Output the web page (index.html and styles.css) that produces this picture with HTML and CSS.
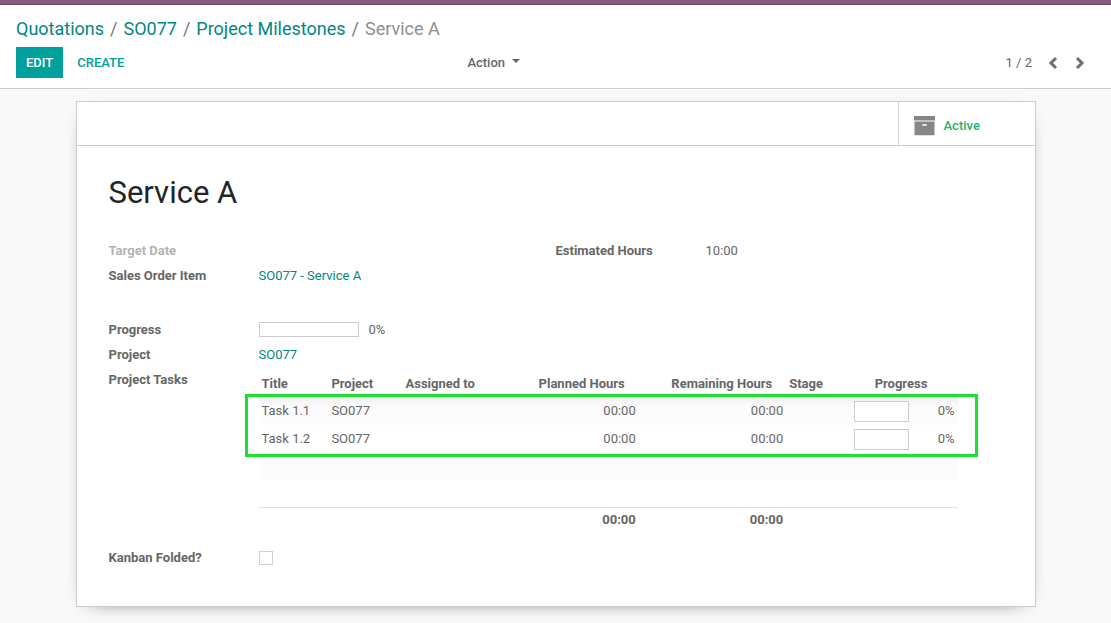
FILE: index.html
```html
<!DOCTYPE html>
<html lang="en">
<head>
<meta charset="utf-8">
<title>Service A - Odoo</title>
<link rel="stylesheet" href="styles.css">
</head>
<body>
<div class="navbar"></div>
<header class="control-panel">
  <nav aria-label="Breadcrumb">
    <ol class="breadcrumb">
      <li><a href="#">Quotations</a></li>
      <li><a href="#">SO077</a></li>
      <li><a href="#">Project Milestones</a></li>
      <li class="current">Service A</li>
    </ol>
  </nav>
  <div class="toolbar">
    <div class="buttons">
      <button type="button" class="btn btn-primary">EDIT</button>
      <button type="button" class="btn btn-link">CREATE</button>
    </div>
    <div class="toolbar-right">
      <button type="button" class="dropdown">Action<span class="caret"></span></button>
      <div class="pager">
        <span>1 / 2</span>
        <button type="button" aria-label="Previous"><svg width="10" height="14" viewBox="0 0 10 14"><path d="M8 2L3 7l5 5" /></svg></button>
        <button type="button" aria-label="Next"><svg width="10" height="14" viewBox="0 0 10 14"><path d="M2 2l5 5-5 5" /></svg></button>
      </div>
    </div>
  </div>
</header>
<main class="content">
  <section class="sheet">
    <div class="button-box">
      <button type="button" class="stat-button">
        <svg width="22" height="20" viewBox="0 0 22 20"><path fill="#868686" fill-rule="evenodd" d="M.5 0h20a.5.5 0 0 1 .5.5V4a.5.5 0 0 1-.5.5H.5A.5.5 0 0 1 0 4V.5A.5.5 0 0 1 .5 0zM1 5.500h19a.5.5 0 0 1 .5.5v12.800a.5.5 0 0 1-.5.5H1a.5.5 0 0 1-.5-.5V6a.5.5 0 0 1 .5-.5zM8.800 8.200a.8.8 0 0 0 0 1.600h3.400a.8.8 0 0 0 0-1.600z"/></svg>
        <span>Active</span>
      </button>
    </div>
    <div class="sheet-body">
      <h1 class="title">Service A</h1>
      <div class="groups">
        <dl class="group">
          <dt class="empty">Target Date</dt><dd></dd>
          <dt>Sales Order Item</dt><dd><a href="#">SO077 - Service A</a></dd>
        </dl>
        <dl class="group">
          <dt>Estimated Hours</dt><dd>10:00</dd>
        </dl>
      </div>
      <div class="group group-wide">
        <span class="label">Progress</span>
        <div class="progress"><span class="bar"></span><span>0%</span></div>
        <span class="label">Project</span>
        <div><a href="#">SO077</a></div>
        <span class="label">Project Tasks</span>
        <div class="tasks">
          <table>
            <colgroup><col class="c-title"><col class="c-project"><col class="c-assigned"><col class="c-planned"><col class="c-remaining"><col class="c-stage"><col class="c-progress"></colgroup>
            <thead>
              <tr><th>Title</th><th>Project</th><th>Assigned to</th><th class="num">Planned Hours</th><th class="num">Remaining Hours</th><th>Stage</th><th class="mid">Progress</th></tr>
            </thead>
            <tbody>
              <tr><td>Task 1.1</td><td>SO077</td><td></td><td class="num">00:00</td><td class="num">00:00</td><td></td><td><div class="cell-progress"><span class="cell-bar"></span><span>0%</span></div></td></tr>
              <tr><td>Task 1.2</td><td>SO077</td><td></td><td class="num">00:00</td><td class="num">00:00</td><td></td><td><div class="cell-progress"><span class="cell-bar"></span><span>0%</span></div></td></tr>
              <tr><td colspan="7"></td></tr>
              <tr><td colspan="7"></td></tr>
            </tbody>
            <tfoot>
              <tr><td></td><td></td><td></td><td class="num">00:00</td><td class="num">00:00</td><td></td><td></td></tr>
            </tfoot>
          </table>
          <div class="highlight"></div>
        </div>
        <label class="label" for="folded">Kanban Folded?</label>
        <div class="check"><input type="checkbox" id="folded"></div>
      </div>
    </div>
  </section>
</main>
</body>
</html>
```
FILE: styles.css
```css
* { box-sizing: border-box; }

body {
  margin: 0;
  min-height: 100vh;
  display: flex;
  flex-direction: column;
  background: #f9f9f9;
  color: #666;
  font: 13px/20px Roboto, "Liberation Sans", sans-serif;
}

a { color: #008784; text-decoration: none; }
button { font: inherit; border: 0; background: none; padding: 0; cursor: pointer; }

.navbar { height: 5px; background: #875a7b; border-bottom: 1px solid #68465f; }

.control-panel {
  padding: 10px 16px;
  background: #fff;
  border-bottom: 1px solid #ccc;
}

.breadcrumb {
  display: flex;
  margin: 0 0 4px;
  padding: 0;
  list-style: none;
  font-size: 18px;
  line-height: 28px;
}
.breadcrumb li + li::before { content: "/"; padding: 0 6px; color: #777; }
.breadcrumb .current { color: #8f8f8f; }

.toolbar { display: flex; }
.buttons { flex: 0 0 41%; display: flex; gap: 4px; }
.btn { height: 31px; padding: 0 10px; font-weight: 500; }
.btn-primary { background: #00a09d; color: #fff; }
.btn-link { color: #00a09d; }
.toolbar-right { flex: 1; display: flex; justify-content: space-between; align-items: center; padding-left: 9px; }
.dropdown { display: flex; align-items: center; gap: 7px; color: #666; font-weight: 500; }
.caret { border: 4px solid transparent; border-top-color: #666; border-bottom: 0; margin-bottom: 4px; }
.pager { display: flex; align-items: center; gap: 15px; padding-right: 9px; }
.pager button { display: flex; width: 12px; justify-content: center; }
.pager path { fill: none; stroke: #6b7078; stroke-width: 3; }

.content { flex: 1; padding: 12px 16px 16px; }

.sheet {
  max-width: 960px;
  margin: 0 auto;
  background: #fff;
  border: 1px solid #c9ccd2;
  box-shadow: 0 5px 20px -15px #000;
}

.button-box { display: flex; justify-content: flex-end; height: 44px; border-bottom: 1px solid #c9ccd2; }
.stat-button {
  display: flex;
  align-items: center;
  gap: 8px;
  width: 137px;
  padding: 4px 0 0 15px;
  border-left: 1px solid #d4d8de;
  color: #21b56e;
  font-weight: 500;
}

.sheet-body { padding: 29px 32px 36px; }
.title { margin: 0 0 27px; color: #212529; font-size: 31px; line-height: 36px; font-weight: 400; }

.groups { display: grid; grid-template-columns: 1fr 1fr; margin-bottom: 29px; }
.group {
  display: grid;
  grid-template-columns: 150px 1fr;
  grid-auto-rows: minmax(25px, auto);
  align-content: start;
  line-height: 25px;
  margin: 0;
}
.group dd { margin: 0; }
.group dt, .label { font-weight: 700; }
.group dt.empty { color: #b3b3b3; }
.group-wide { padding-right: 45px; }

.progress { display: flex; align-items: center; gap: 10px; }
.bar { width: 100px; height: 15px; border: 1px solid #ccc; }

.tasks { position: relative; padding: 3px 0 13px; line-height: 20px; }
table { width: 100%; table-layout: fixed; border-collapse: collapse; }
.c-title { width: 10%; }
.c-project { width: 10.6%; }
.c-assigned { width: 18.4%; }
.c-planned { width: 15.4%; }
.c-remaining { width: 21.1%; }
.c-stage { width: 9.2%; }
.c-progress { width: 15.3%; }
th, td { height: 28px; padding: 0 3px; text-align: left; }
th { font-weight: 700; height: 27px; white-space: nowrap; }
.num { text-align: right; }
th.num { padding-right: 14px; }
th.mid { text-align: center; padding-right: 9px; }
tbody tr:nth-child(odd) { background: #fcfcfc; }
tbody tr:first-child { background: linear-gradient(#ececec, #f7f7f7 5px, #fcfcfc 11px); }
tbody tr:nth-child(n+3) td { height: 27px; }
tfoot { border-top: 1px solid #dee2e6; font-weight: 700; }
tfoot td { height: 25px; }
.cell-progress { display: flex; justify-content: space-between; align-items: center; }
.cell-bar { width: 55px; height: 21px; background: #fff; border: 1px solid #ccc; }

.highlight {
  position: absolute;
  top: 27px;
  left: -14px;
  right: -20px;
  height: 63px;
  border: 3px solid #1de030;
  pointer-events: none;
}

.check { display: flex; align-items: center; }
.check input {
  appearance: none;
  width: 14px;
  height: 14px;
  margin: 0;
  background: #fff;
  border: 1px solid #d2d2d2;
}
```
